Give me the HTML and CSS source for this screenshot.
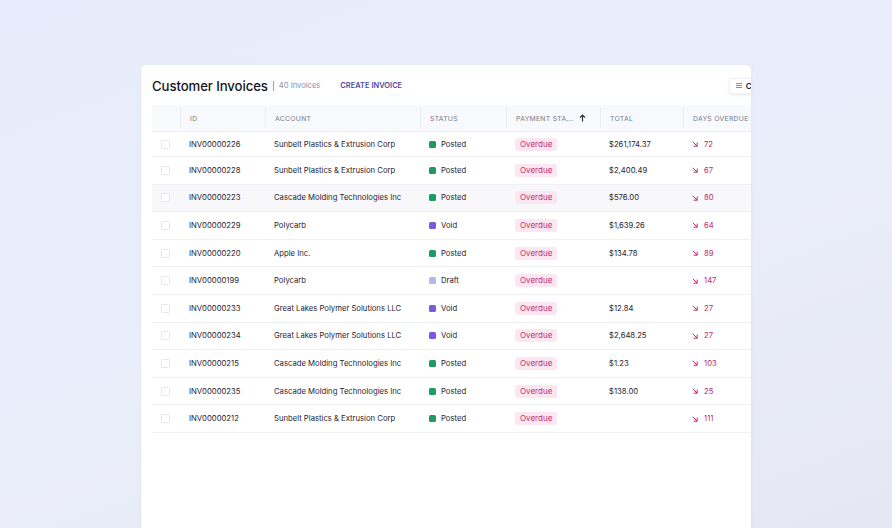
FILE: index.html
```html
<!DOCTYPE html>
<html>
<head>
<meta charset="utf-8">
<link rel="stylesheet" href="styles.css">
</head>
<body>
<div class="card">
  <div class="inner">
    <div class="toolbar">
      <h1 class="title">Customer Invoices</h1>
      <span class="divider"></span>
      <span class="count">40 Invoices</span>
      <a class="create">CREATE INVOICE</a>
      <button class="colbtn"><span class="ham"><i></i><i></i><i></i></span>Columns</button>
    </div>
    <div class="grid">
      <div class="row head">
        <div class="cell"></div>
        <div class="cell sep">ID</div>
        <div class="cell sep">ACCOUNT</div>
        <div class="cell sep">STATUS</div>
        <div class="cell sep">PAYMENT STA... <svg class="sort" width="7" height="8" viewBox="0 0 7 8"><path d="M3.5 7.5V1M1 3.5L3.5 1L6 3.5" fill="none" stroke="#2f3442" stroke-width="1.2"/></svg></div>
        <div class="cell sep">TOTAL</div>
        <div class="cell sep">DAYS OVERDUE</div>
      </div>
      <div id="rows" class="body"></div>
    </div>
  </div>
</div>
<script src="app.js"></script>
</body>
</html>
```
FILE: app.js
```js
var data = [
  ["INV00000226","Sunbelt Plastics & Extrusion Corp","posted","$261,174.37","72"],
  ["INV00000228","Sunbelt Plastics & Extrusion Corp","posted","$2,400.49","67"],
  ["INV00000223","Cascade Molding Technologies Inc","posted","$576.00","80"],
  ["INV00000229","Polycarb","void","$1,639.26","64"],
  ["INV00000220","Apple Inc.","posted","$134.78","89"],
  ["INV00000199","Polycarb","draft","","147"],
  ["INV00000233","Great Lakes Polymer Solutions LLC","void","$12.84","27"],
  ["INV00000234","Great Lakes Polymer Solutions LLC","void","$2,648.25","27"],
  ["INV00000215","Cascade Molding Technologies Inc","posted","$1.23","103"],
  ["INV00000235","Cascade Molding Technologies Inc","posted","$138.00","25"],
  ["INV00000212","Sunbelt Plastics & Extrusion Corp","posted","","111"]
];
var labels = {posted:"Posted", void:"Void", draft:"Draft"};
var html = "";
data.forEach(function (r, i) {
  html += '<div class="row' + (i === 2 ? ' hover' : '') + '">' +
    '<div class="cell"><span class="check"></span></div>' +
    '<div class="cell">' + r[0] + '</div>' +
    '<div class="cell">' + r[1].replace("&", "&amp;") + '</div>' +
    '<div class="cell"><span class="dot ' + r[2] + '"></span>' + labels[r[2]] + '</div>' +
    '<div class="cell"><span class="pill">Overdue</span></div>' +
    '<div class="cell">' + r[3] + '</div>' +
    '<div class="cell days"><svg class="arrow" width="6" height="6" viewBox="0 0 6 6"><path d="M0.8 0.8L5.2 5.2M5.2 1.6V5.2H1.6" fill="none" stroke="#c2266f" stroke-width="1"/></svg>' + r[4] + '</div>' +
    '</div>';
});
document.getElementById("rows").innerHTML = html;
```
FILE: styles.css
```css
* { box-sizing: border-box; }
html, body { margin: 0; height: 100%; }
body {
  background: linear-gradient(160deg, #e6ecfb 0%, #eaedfa 50%, #e5e7f5 100%);
  font-family: "Inter", "Liberation Sans", sans-serif;
  color: #1f2430;
  overflow: hidden;
}
.card {
  position: relative;
  margin: 65px 0 0 141px;
  width: 610px;
  height: 470px;
  background: #fff;
  border-radius: 5px;
  overflow: hidden;
  box-shadow: 0 1px 4px rgba(60, 70, 120, 0.06);
}
.inner {
  width: 646px;
  padding-left: 11px;
}
.toolbar {
  height: 40px;
  display: flex;
  align-items: center;
  padding-top: 1px;
}
.title {
  margin: 0;
  font-size: 13.2px;
  font-weight: 500;
  color: #14161f;
  letter-spacing: -0.1px;
}
.divider {
  width: 1px;
  height: 10px;
  background: #9aa0ad;
  margin: 1px 5px 0 5px;
}
.count {
  font-size: 7.6px;
  color: #8b90a0;
}
.create {
  margin-left: 20px;
  font-size: 7.4px;
  font-weight: 600;
  color: #4b4a9e;
  letter-spacing: 0.05px;
}
.colbtn {
  margin-left: auto;
  height: 16px;
  padding: 0 6px 0 6px;
  display: flex;
  align-items: center;
  gap: 4px;
  border: 1px solid #eef0f5;
  border-radius: 3px;
  background: #fff;
  box-shadow: 0 1px 3px rgba(40, 50, 90, 0.1);
  font-family: inherit;
  font-size: 8px;
  font-weight: 600;
  color: #1f2430;
}
.ham { display: flex; flex-direction: column; gap: 1px; width: 6px; }
.ham i { display: block; height: 1px; background: #8b90a0; }
.grid { width: 621px; }
.row {
  display: grid;
  grid-template-columns: 28px 85px 155px 86px 94px 83px 90px;
  height: 27.6px;
  border-bottom: 1px solid #eef0f4;
  font-size: 7.7px;
  color: #1f2430;
}
.body .row:first-child { height: 25px; }
.row.head {
  height: 27px;
  background: #f8f9fc;
  border-bottom: 1px solid #eceef3;
  font-size: 6.8px;
  color: #737888;
  letter-spacing: 0.3px;
}
.row.hover { background: #f8f8fa; }
.cell {
  display: flex;
  align-items: center;
  padding-left: 9px;
  white-space: nowrap;
}
.cell.sep { border-left: 1px solid #eceef3; padding-left: 9px; }
.head .cell.sep { margin: 3px 0; }
.check {
  width: 9px;
  height: 9px;
  border: 1px solid #e4e6ec;
  border-radius: 1.5px;
  background: #fff;
}
.dot {
  width: 7px;
  height: 7px;
  border-radius: 1.5px;
  margin-right: 5px;
}
.dot.posted { background: #1e9a63; }
.dot.void { background: #7b5ae0; }
.dot.draft { background: #b7b8e6; }
.pill {
  display: inline-block;
  height: 13px;
  line-height: 13px;
  padding: 0 5px;
  border-radius: 3px;
  background: #fce6f2;
  color: #c0306f;
  font-size: 8px;
}
.sort { margin-left: 6px; }
.days { color: #b42d6a; }
.arrow { margin-right: 6px; }
```
